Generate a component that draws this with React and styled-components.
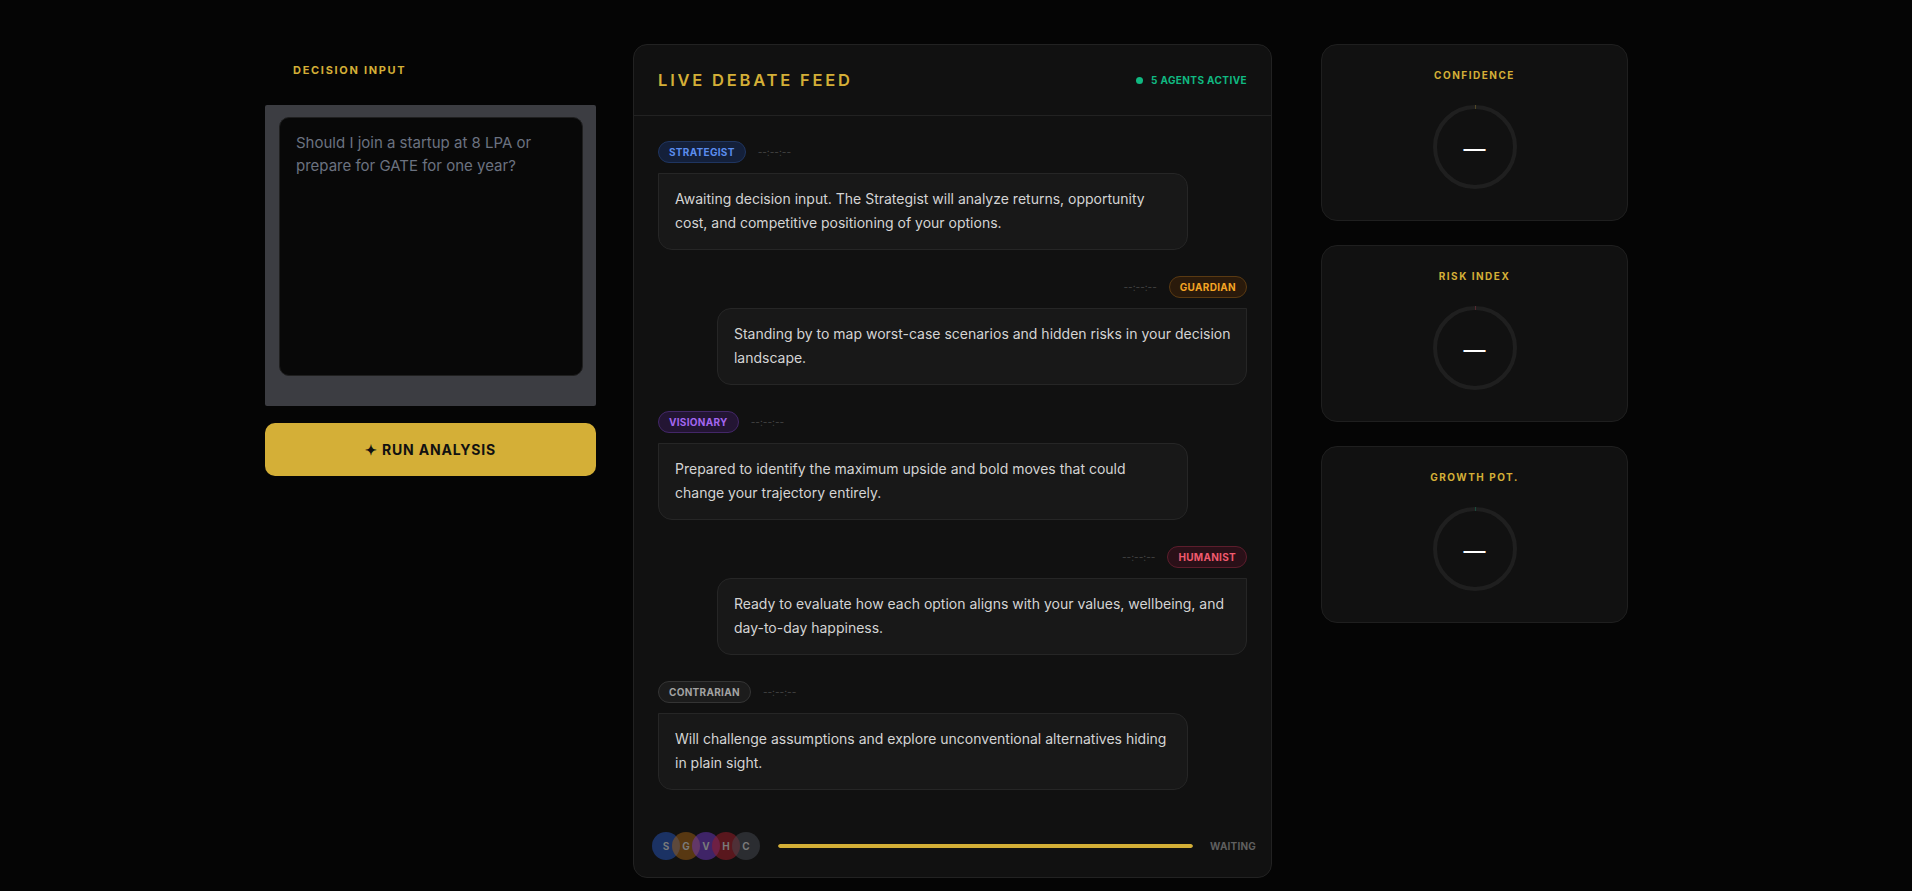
import React from "react";
import styled, { createGlobalStyle } from "styled-components";

const GOLD = "#d4af37";

const GlobalStyle = createGlobalStyle`
  html, body {
    margin: 0;
    padding: 0;
    background: #050505;
    font-family: "Inter", "Noto Sans", sans-serif;
    color: #d4d4d4;
  }
  * {
    box-sizing: border-box;
  }
`;

const Page = styled.div`
  min-height: 100vh;
  display: flex;
  align-items: flex-start;
  padding: 44px 0 0 265px;
`;

const LeftColumn = styled.div`
  width: 331px;
  display: flex;
  flex-direction: column;
`;

const SectionLabel = styled.div`
  padding: 19px 28px 0;
  margin-bottom: 28px;
  font-size: 11px;
  line-height: 14px;
  font-weight: 700;
  letter-spacing: 1.7px;
  color: ${GOLD};
  text-transform: uppercase;
`;

const InputFrame = styled.div`
  background: #3c3d42;
  padding: 12px 13px 30px 14px;
  border-radius: 2px;
`;

const DecisionArea = styled.textarea`
  display: block;
  width: 100%;
  height: 259px;
  resize: none;
  background: #080808;
  border: 1px solid #1f1f1f;
  border-radius: 10px;
  padding: 13px 16px;
  font-family: "Inter", sans-serif;
  font-size: 15px;
  line-height: 23px;
  color: #e5e5e5;
  outline: none;

  &::placeholder {
    color: #6b7280;
  }
`;

const RunButton = styled.button`
  margin-top: 17px;
  height: 53px;
  width: 100%;
  border: none;
  border-radius: 10px;
  background: ${GOLD};
  color: #111;
  font-family: "Inter", sans-serif;
  font-size: 14px;
  font-weight: 700;
  letter-spacing: 0.8px;
  cursor: pointer;
`;

const FeedPanel = styled.section`
  width: 639px;
  height: 834px;
  margin-left: 37px;
  background: #111111;
  border: 1px solid #222;
  border-radius: 14px;
  display: flex;
  flex-direction: column;
  overflow: hidden;
`;

const FeedHeader = styled.header`
  height: 71px;
  flex-shrink: 0;
  display: flex;
  align-items: center;
  justify-content: space-between;
  padding: 0 24px;
  border-bottom: 1px solid #222;
`;

const FeedTitle = styled.h2`
  margin: 0;
  font-size: 16.5px;
  font-weight: 600;
  letter-spacing: 2.8px;
  color: ${GOLD};
`;

const ActiveTag = styled.div`
  display: flex;
  align-items: center;
  gap: 8px;
  font-size: 10px;
  font-weight: 700;
  letter-spacing: 0.4px;
  color: #10b981;
`;

const Dot = styled.span`
  width: 7px;
  height: 7px;
  border-radius: 50%;
  background: #10b981;
`;

const MessageList = styled.div`
  flex: 1;
  display: flex;
  flex-direction: column;
  gap: 26px;
  padding: 25px 24px 0;
`;

const Message = styled.div`
  display: flex;
  flex-direction: column;
  align-items: ${({ $right }) => ($right ? "flex-end" : "flex-start")};
  gap: 10px;
`;

const MessageMeta = styled.div`
  display: flex;
  align-items: center;
  gap: 12px;
  flex-direction: ${({ $right }) => ($right ? "row-reverse" : "row")};
`;

const Badge = styled.span`
  height: 22px;
  padding: 0 10px;
  display: inline-flex;
  align-items: center;
  border-radius: 11px;
  font-size: 10px;
  font-weight: 700;
  letter-spacing: 0.3px;
  color: ${({ $fg }) => $fg};
  background: ${({ $bg }) => $bg};
  border: 1px solid ${({ $border }) => $border};
`;

const Timestamp = styled.span`
  font-size: 10px;
  color: #454545;
`;

const Bubble = styled.div`
  width: 90%;
  padding: 13px 13px 14px 16px;
  background: #181818;
  border: 1px solid #262626;
  border-radius: ${({ $right }) =>
    $right ? "14px 0 14px 14px" : "0 14px 14px 14px"};
  font-size: 14px;
  line-height: 24px;
  color: #d4d4d4;
`;

const FeedFooter = styled.footer`
  height: 62px;
  flex-shrink: 0;
  display: flex;
  align-items: center;
  padding: 0 15px 0 18px;
`;

const AvatarStack = styled.div`
  display: flex;
  margin-right: 18px;
`;

const Avatar = styled.span`
  width: 28px;
  height: 28px;
  border-radius: 50%;
  margin-left: ${({ $first }) => ($first ? "0" : "-8px")};
  background: ${({ $color }) => $color};
  display: flex;
  align-items: center;
  justify-content: center;
  font-size: 10px;
  font-weight: 700;
  color: #7a7a7a;
`;

const ProgressTrack = styled.div`
  flex: 1;
  height: 4px;
  border-radius: 2px;
  background: #1c1c1c;
  overflow: hidden;
`;

const ProgressFill = styled.div`
  height: 100%;
  background: ${GOLD};
  border-radius: 2px;
`;

const StatusText = styled.span`
  margin-left: 17px;
  font-size: 10px;
  font-weight: 700;
  color: #5f5f5f;
  letter-spacing: 0.2px;
`;

const RightColumn = styled.div`
  width: 307px;
  margin-left: 49px;
  display: flex;
  flex-direction: column;
  gap: 24px;
`;

const MetricCard = styled.div`
  height: 177px;
  background: #111111;
  border: 1px solid #1f1f1f;
  border-radius: 16px;
  padding: 23px 0 0;
  display: flex;
  flex-direction: column;
  align-items: center;
`;

const MetricLabel = styled.div`
  font-size: 10px;
  line-height: 14px;
  font-weight: 700;
  letter-spacing: 1.5px;
  color: ${GOLD};
`;

const Gauge = styled.div`
  position: relative;
  margin-top: 23px;
  width: 84px;
  height: 84px;
  display: flex;
  align-items: center;
  justify-content: center;
`;

const GaugeSvg = styled.svg`
  position: absolute;
  inset: 0;
`;

const GaugeValue = styled.span`
  font-size: 22px;
  font-weight: 500;
  color: #ffffff;
  line-height: 1;
  margin-top: 3px;
`;

const messages = [
  {
    name: "STRATEGIST",
    fg: "#5b8def",
    bg: "#14203a",
    border: "#1f3560",
    text: "Awaiting decision input. The Strategist will analyze returns, opportunity cost, and competitive positioning of your options.",
  },
  {
    name: "GUARDIAN",
    right: true,
    fg: "#f5a524",
    bg: "#2a1a0b",
    border: "#5a3a12",
    text: "Standing by to map worst-case scenarios and hidden risks in your decision landscape.",
  },
  {
    name: "VISIONARY",
    fg: "#a466f0",
    bg: "#231533",
    border: "#432768",
    text: "Prepared to identify the maximum upside and bold moves that could change your trajectory entirely.",
  },
  {
    name: "HUMANIST",
    right: true,
    fg: "#f05a6e",
    bg: "#2a1018",
    border: "#5c1d2c",
    text: "Ready to evaluate how each option aligns with your values, wellbeing, and day-to-day happiness.",
  },
  {
    name: "CONTRARIAN",
    fg: "#a3a3a3",
    bg: "#1c1c1c",
    border: "#343434",
    text: "Will challenge assumptions and explore unconventional alternatives hiding in plain sight.",
  },
];

const avatars = [
  { letter: "S", color: "rgba(37, 78, 170, 0.55)" },
  { letter: "G", color: "rgba(160, 95, 20, 0.5)" },
  { letter: "V", color: "rgba(110, 55, 190, 0.5)" },
  { letter: "H", color: "rgba(150, 30, 40, 0.55)" },
  { letter: "C", color: "rgba(70, 74, 82, 0.5)" },
];

const metrics = [
  { label: "CONFIDENCE", accent: GOLD },
  { label: "RISK INDEX", accent: "#e0445a" },
  { label: "GROWTH POT.", accent: "#10b981" },
];

const GaugeRing = ({ accent }) => (
  <GaugeSvg width="84" height="84" viewBox="0 0 84 84">
    <circle cx="42" cy="42" r="40" fill="none" stroke="#1f1f1f" strokeWidth="4" />
    <circle
      cx="42"
      cy="42"
      r="40"
      fill="none"
      stroke={accent}
      strokeWidth="4"
      strokeOpacity="0.5"
      strokeDasharray="0.6 300"
      transform="rotate(-90 42 42)"
    />
  </GaugeSvg>
);

export default function App() {
  return (
    <>
      <GlobalStyle />
      <Page>
        <LeftColumn>
          <SectionLabel>Decision Input</SectionLabel>
          <InputFrame>
            <DecisionArea placeholder="Should I join a startup at 8 LPA or prepare for GATE for one year?" />
          </InputFrame>
          <RunButton>✦ RUN ANALYSIS</RunButton>
        </LeftColumn>

        <FeedPanel>
          <FeedHeader>
            <FeedTitle>LIVE DEBATE FEED</FeedTitle>
            <ActiveTag>
              <Dot />5 AGENTS ACTIVE
            </ActiveTag>
          </FeedHeader>
          <MessageList>
            {messages.map((m) => (
              <Message key={m.name} $right={m.right}>
                <MessageMeta $right={m.right}>
                  <Badge $fg={m.fg} $bg={m.bg} $border={m.border}>
                    {m.name}
                  </Badge>
                  <Timestamp>--:--:--</Timestamp>
                </MessageMeta>
                <Bubble $right={m.right}>{m.text}</Bubble>
              </Message>
            ))}
          </MessageList>
          <FeedFooter>
            <AvatarStack>
              {avatars.map((a, i) => (
                <Avatar key={a.letter} $color={a.color} $first={i === 0}>
                  {a.letter}
                </Avatar>
              ))}
            </AvatarStack>
            <ProgressTrack>
              <ProgressFill style={{ width: "100%" }} />
            </ProgressTrack>
            <StatusText>WAITING</StatusText>
          </FeedFooter>
        </FeedPanel>

        <RightColumn>
          {metrics.map((m) => (
            <MetricCard key={m.label}>
              <MetricLabel>{m.label}</MetricLabel>
              <Gauge>
                <GaugeRing accent={m.accent} />
                <GaugeValue>—</GaugeValue>
              </Gauge>
            </MetricCard>
          ))}
        </RightColumn>
      </Page>
    </>
  );
}
